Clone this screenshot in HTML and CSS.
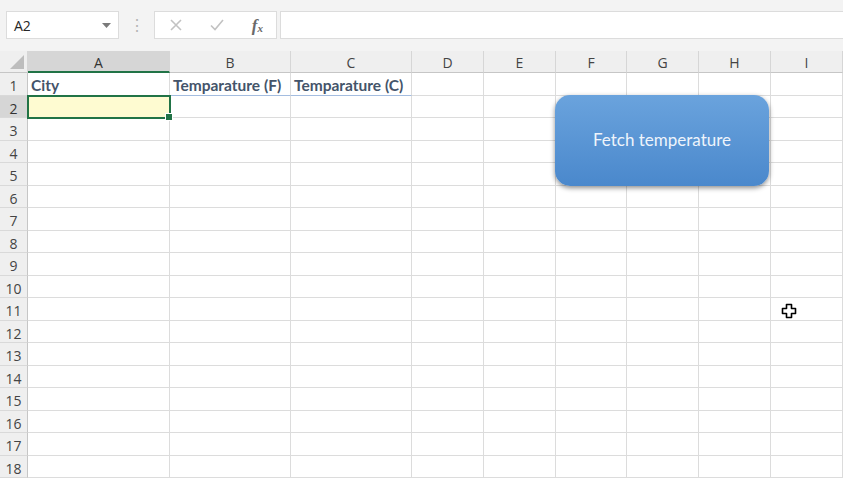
FILE: index.html
```html
<!DOCTYPE html>
<html>
<head>
<meta charset="utf-8">
<link rel="stylesheet" href="styles.css">
</head>
<body>
<div class="app">
  <div class="bar">
    <div class="namebox"><span>A2</span><svg class="caret" width="9" height="5" viewBox="0 0 9 5"><path d="M0 0H9L4.5 5Z" fill="#7a7a7a"/></svg></div>
    <div class="dots">⋮</div>
    <div class="fbtns">
      <svg width="12" height="12" viewBox="0 0 12 12"><path d="M1 1L11 11M11 1L1 11" stroke="#c2c2c2" stroke-width="1.6"/></svg>
      <svg width="14" height="12" viewBox="0 0 14 12"><path d="M1 6.5L5 10.5L13 1" stroke="#c2c2c2" stroke-width="1.6" fill="none"/></svg>
      <span class="fx">f<sub>x</sub></span>
    </div>
    <div class="finput"></div>
  </div>
  <div class="sheet">
    <div class="grid">
      <div class="ch corner"><svg width="14" height="14" viewBox="0 0 14 14"><path d="M14 0V14H0Z" fill="#bdbdbd"/></svg></div>
      <div class="ch csel">A</div><div class="ch">B</div><div class="ch">C</div><div class="ch">D</div><div class="ch">E</div><div class="ch">F</div><div class="ch">G</div><div class="ch">H</div><div class="ch">I</div>

      <div class="rh">1</div><div class="c hd">City</div><div class="c hd">Temparature (F)</div><div class="c hd">Temparature (C)</div><div class="c"></div><div class="c"></div><div class="c"></div><div class="c"></div><div class="c"></div><div class="c"></div>
      <div class="rh rsel">2</div><div class="c sel"></div><div class="c"></div><div class="c"></div><div class="c"></div><div class="c"></div><div class="c"></div><div class="c"></div><div class="c"></div><div class="c"></div>
      <div class="rh">3</div><div class="c"></div><div class="c"></div><div class="c"></div><div class="c"></div><div class="c"></div><div class="c"></div><div class="c"></div><div class="c"></div><div class="c"></div>
      <div class="rh">4</div><div class="c"></div><div class="c"></div><div class="c"></div><div class="c"></div><div class="c"></div><div class="c"></div><div class="c"></div><div class="c"></div><div class="c"></div>
      <div class="rh">5</div><div class="c"></div><div class="c"></div><div class="c"></div><div class="c"></div><div class="c"></div><div class="c"></div><div class="c"></div><div class="c"></div><div class="c"></div>
      <div class="rh">6</div><div class="c"></div><div class="c"></div><div class="c"></div><div class="c"></div><div class="c"></div><div class="c"></div><div class="c"></div><div class="c"></div><div class="c"></div>
      <div class="rh">7</div><div class="c"></div><div class="c"></div><div class="c"></div><div class="c"></div><div class="c"></div><div class="c"></div><div class="c"></div><div class="c"></div><div class="c"></div>
      <div class="rh">8</div><div class="c"></div><div class="c"></div><div class="c"></div><div class="c"></div><div class="c"></div><div class="c"></div><div class="c"></div><div class="c"></div><div class="c"></div>
      <div class="rh">9</div><div class="c"></div><div class="c"></div><div class="c"></div><div class="c"></div><div class="c"></div><div class="c"></div><div class="c"></div><div class="c"></div><div class="c"></div>
      <div class="rh">10</div><div class="c"></div><div class="c"></div><div class="c"></div><div class="c"></div><div class="c"></div><div class="c"></div><div class="c"></div><div class="c"></div><div class="c"></div>
      <div class="rh">11</div><div class="c"></div><div class="c"></div><div class="c"></div><div class="c"></div><div class="c"></div><div class="c"></div><div class="c"></div><div class="c"></div><div class="c"></div>
      <div class="rh">12</div><div class="c"></div><div class="c"></div><div class="c"></div><div class="c"></div><div class="c"></div><div class="c"></div><div class="c"></div><div class="c"></div><div class="c"></div>
      <div class="rh">13</div><div class="c"></div><div class="c"></div><div class="c"></div><div class="c"></div><div class="c"></div><div class="c"></div><div class="c"></div><div class="c"></div><div class="c"></div>
      <div class="rh">14</div><div class="c"></div><div class="c"></div><div class="c"></div><div class="c"></div><div class="c"></div><div class="c"></div><div class="c"></div><div class="c"></div><div class="c"></div>
      <div class="rh">15</div><div class="c"></div><div class="c"></div><div class="c"></div><div class="c"></div><div class="c"></div><div class="c"></div><div class="c"></div><div class="c"></div><div class="c"></div>
      <div class="rh">16</div><div class="c"></div><div class="c"></div><div class="c"></div><div class="c"></div><div class="c"></div><div class="c"></div><div class="c"></div><div class="c"></div><div class="c"></div>
      <div class="rh">17</div><div class="c"></div><div class="c"></div><div class="c"></div><div class="c"></div><div class="c"></div><div class="c"></div><div class="c"></div><div class="c"></div><div class="c"></div>
      <div class="rh">18</div><div class="c"></div><div class="c"></div><div class="c"></div><div class="c"></div><div class="c"></div><div class="c"></div><div class="c"></div><div class="c"></div><div class="c"></div>
    </div>
    <div class="shape">Fetch temperature</div>
    <svg class="cursor" width="16" height="16" viewBox="0 0 16 16"><path d="M5.5 1.5H10.5V5.5H14.5V10.5H10.5V14.5H5.5V10.5H1.5V5.5H5.5Z" fill="#fff" stroke="#000" stroke-width="1.6" stroke-linejoin="round"/></svg>
  </div>
</div>
</body>
</html>
```
FILE: styles.css
```css
* { box-sizing: border-box; }
html, body { margin: 0; padding: 0; }
body {
  width: 843px;
  height: 480px;
  overflow: hidden;
  background: #f3f3f3;
  font-family: "Open Sans", "Noto Sans", sans-serif;
}
.app { display: flex; flex-direction: column; }
.bar {
  height: 51px;
  display: flex;
  align-items: flex-start;
  padding-top: 11px;
  padding-left: 6px;
}
.namebox {
  width: 113px;
  height: 28px;
  background: #fff;
  border: 1px solid #dcdcdc;
  display: flex;
  align-items: center;
  justify-content: space-between;
  padding: 0 7px 0 7px;
  font-size: 14px;
  color: #262626;
}
.caret { margin-top: 1px; }
.dots {
  width: 35px;
  text-align: center;
  color: #b5b5b5;
  font-size: 16px;
  line-height: 28px;
}
.fbtns {
  width: 123px;
  height: 28px;
  background: #fff;
  border: 1px solid #dcdcdc;
  display: flex;
  align-items: center;
  justify-content: space-between;
  padding: 0 13px 0 15px;
}
.fx {
  font-family: "Liberation Serif", serif;
  font-style: italic;
  font-size: 17px;
  color: #6a6a6a;
  font-weight: bold;
  line-height: 1;
}
.fx sub { font-size: 11px; vertical-align: -1px; }
.finput {
  margin-left: 3px;
  flex: 1;
  height: 28px;
  background: #fff;
  border: 1px solid #dcdcdc;
  border-right: none;
}
.sheet { position: relative; background: #fff; height: 429px; }
.grid {
  display: grid;
  grid-template-columns: 28px 142px 121px 121px 72px 72px 71px 72px 72px 72px;
  grid-template-rows: 22px repeat(18, 22.5px);
}
.ch {
  background: #efefef;
  border-right: 1px solid #d6d6d6;
  border-bottom: 1px solid #c6c6c6;
  text-align: center;
  font-size: 14px;
  line-height: 21px;
  padding-top: 1px;
  color: #444;
}
.corner {
  display: flex;
  align-items: flex-end;
  justify-content: flex-end;
  padding: 0 3px 3px 0;
}
.csel {
  background: #d6d6d6;
  border-bottom: 2px solid #217346;
  color: #333;
}
.rh {
  background: #efefef;
  border-right: 1px solid #c6c6c6;
  border-bottom: 1px solid #d9d9d9;
  text-align: center;
  font-size: 14px;
  line-height: 22px;
  padding-top: 2px;
  color: #444;
}
.rsel { background: #d6d6d6; color: #333; }
.c {
  border-right: 1px solid #dcdcdc;
  border-bottom: 1px solid #dcdcdc;
}
.hd {
  font-family: "Lato", "Liberation Sans", sans-serif;
  font-weight: bold;
  font-size: 15.5px;
  color: #44546a;
  line-height: 22px;
  padding-top: 1px;
  padding-left: 3px;
  white-space: nowrap;
  overflow: visible;
  border-bottom: 1px solid #a4bde0;
}
.sel {
  position: relative;
  background: #fefbd1;
  outline: 2px solid #217346;
  outline-offset: -1px;
}
.sel::after {
  content: "";
  position: absolute;
  right: -4px;
  bottom: -4px;
  width: 6px;
  height: 6px;
  background: #217346;
  border: 1px solid #fff;
}
.shape {
  position: absolute;
  left: 555px;
  top: 44px;
  width: 214px;
  height: 91px;
  border-radius: 15px;
  background: linear-gradient(#6aa3dd, #4a88cc);
  box-shadow: 0 2px 5px rgba(0,0,0,0.45);
  display: flex;
  align-items: center;
  justify-content: center;
  padding-bottom: 3px;
  color: #eef4fb;
  font-family: "Lato", "Open Sans", sans-serif;
  font-size: 17px;
}
.cursor {
  position: absolute;
  left: 781px;
  top: 252px;
}
```
